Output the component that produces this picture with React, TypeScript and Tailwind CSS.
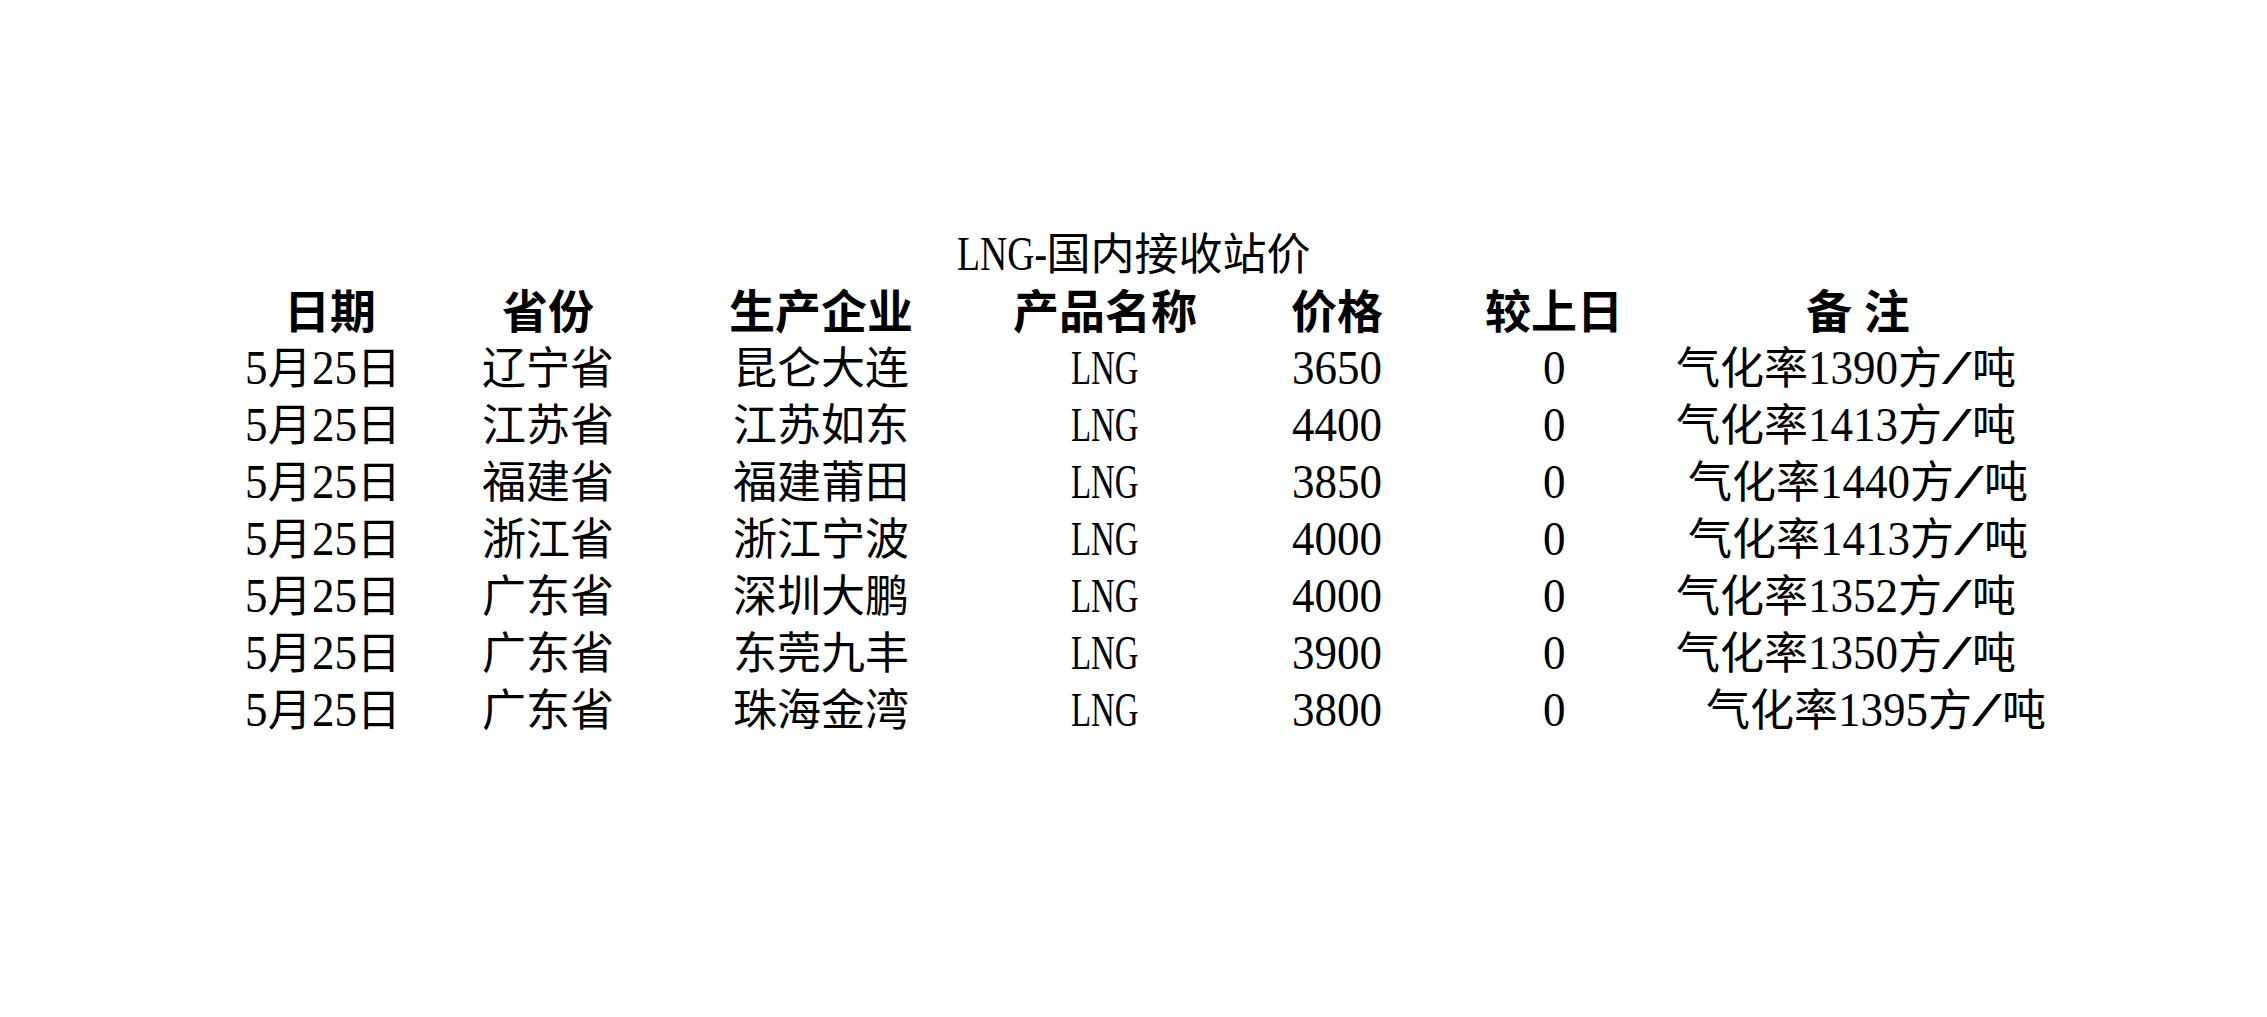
import React from "react";

// Approximate advance widths (em) of Liberation Serif for the ASCII glyphs used here
const W: Record<string, number> = {
  "0": 0.5, "1": 0.5, "2": 0.5, "3": 0.5, "4": 0.5, "5": 0.5, "6": 0.5, "7": 0.5, "8": 0.5, "9": 0.5,
  L: 0.611, N: 0.722, G: 0.722, "-": 0.333, "/": 0.278, " ": 0.25,
};
const PITCH: Record<string, number> = { "/": 30, " ": 22 };

function Latin({ s }: { s: string }) {
  const size = 48;
  let natural = 0;
  let target = 0;
  for (const ch of s) {
    natural += (W[ch] ?? 0.5) * size;
    target += PITCH[ch] ?? 22.5;
  }
  return (
    <span className="inline-block whitespace-nowrap text-left text-[48px] leading-[0]" style={{ width: target }}>
      <span className="inline-block origin-left" style={{ transform: `scaleX(${target / natural})` }}>
        {s}
      </span>
    </span>
  );
}

function T({ s }: { s: string }) {
  const parts = s.split(/([\x20-\x7E]+)/).filter((p) => p.length > 0);
  return (
    <>
      {parts.map((p, i) => (/^[\x20-\x7E]+$/.test(p) ? <Latin key={i} s={p} /> : <span key={i}>{p}</span>))}
    </>
  );
}

const rows: { prov: string; co: string; price: string; rem: string; off: string }[] = [
  { prov: "辽宁省", co: "昆仑大连", price: "3650", rem: "气化率1390方/吨", off: "pl-[18px]" },
  { prov: "江苏省", co: "江苏如东", price: "4400", rem: "气化率1413方/吨", off: "pl-[18px]" },
  { prov: "福建省", co: "福建莆田", price: "3850", rem: "气化率1440方/吨", off: "pl-[30px]" },
  { prov: "浙江省", co: "浙江宁波", price: "4000", rem: "气化率1413方/吨", off: "pl-[30px]" },
  { prov: "广东省", co: "深圳大鹏", price: "4000", rem: "气化率1352方/吨", off: "pl-[18px]" },
  { prov: "广东省", co: "东莞九丰", price: "3900", rem: "气化率1350方/吨", off: "pl-[18px]" },
  { prov: "广东省", co: "珠海金湾", price: "3800", rem: "气化率1395方/吨", off: "pl-[48px]" },
];

const cols = "grid grid-cols-[220px_216px_330px_238px_226px_208px_400px]";

export default function App() {
  return (
    <div
      className="w-[2267px] h-[1017px] bg-white text-black overflow-hidden"
      style={{ fontFamily: '"Liberation Serif", "Noto Sans CJK SC", serif' }}
    >
      <div className="pt-[227px]">
        <div className="h-[57px] leading-[57px] text-[44px] text-center whitespace-nowrap">
          <T s="LNG-国内接收站价" />
        </div>
        <div className="pl-[220px]">
          <div className={`${cols} h-[57px] leading-[57px] text-[46px] font-bold text-center`}>
            <div>日期</div>
            <div>省份</div>
            <div>生产企业</div>
            <div>产品名称</div>
            <div>价格</div>
            <div>较上日</div>
            <div>备 注</div>
          </div>
          {rows.map((r, i) => (
            <div key={i} className={`${cols} h-[57px] leading-[57px] text-[44px] whitespace-nowrap`}>
              <div className="text-center pr-[14px]">
                <T s="5月25日" />
              </div>
              <div className="text-center">{r.prov}</div>
              <div className="text-center">{r.co}</div>
              <div className="text-center">
                <Latin s="LNG" />
              </div>
              <div className="text-center">
                <Latin s={r.price} />
              </div>
              <div className="text-center">
                <Latin s="0" />
              </div>
              <div className={`text-left ${r.off}`}>
                <T s={r.rem} />
              </div>
            </div>
          ))}
        </div>
      </div>
    </div>
  );
}
